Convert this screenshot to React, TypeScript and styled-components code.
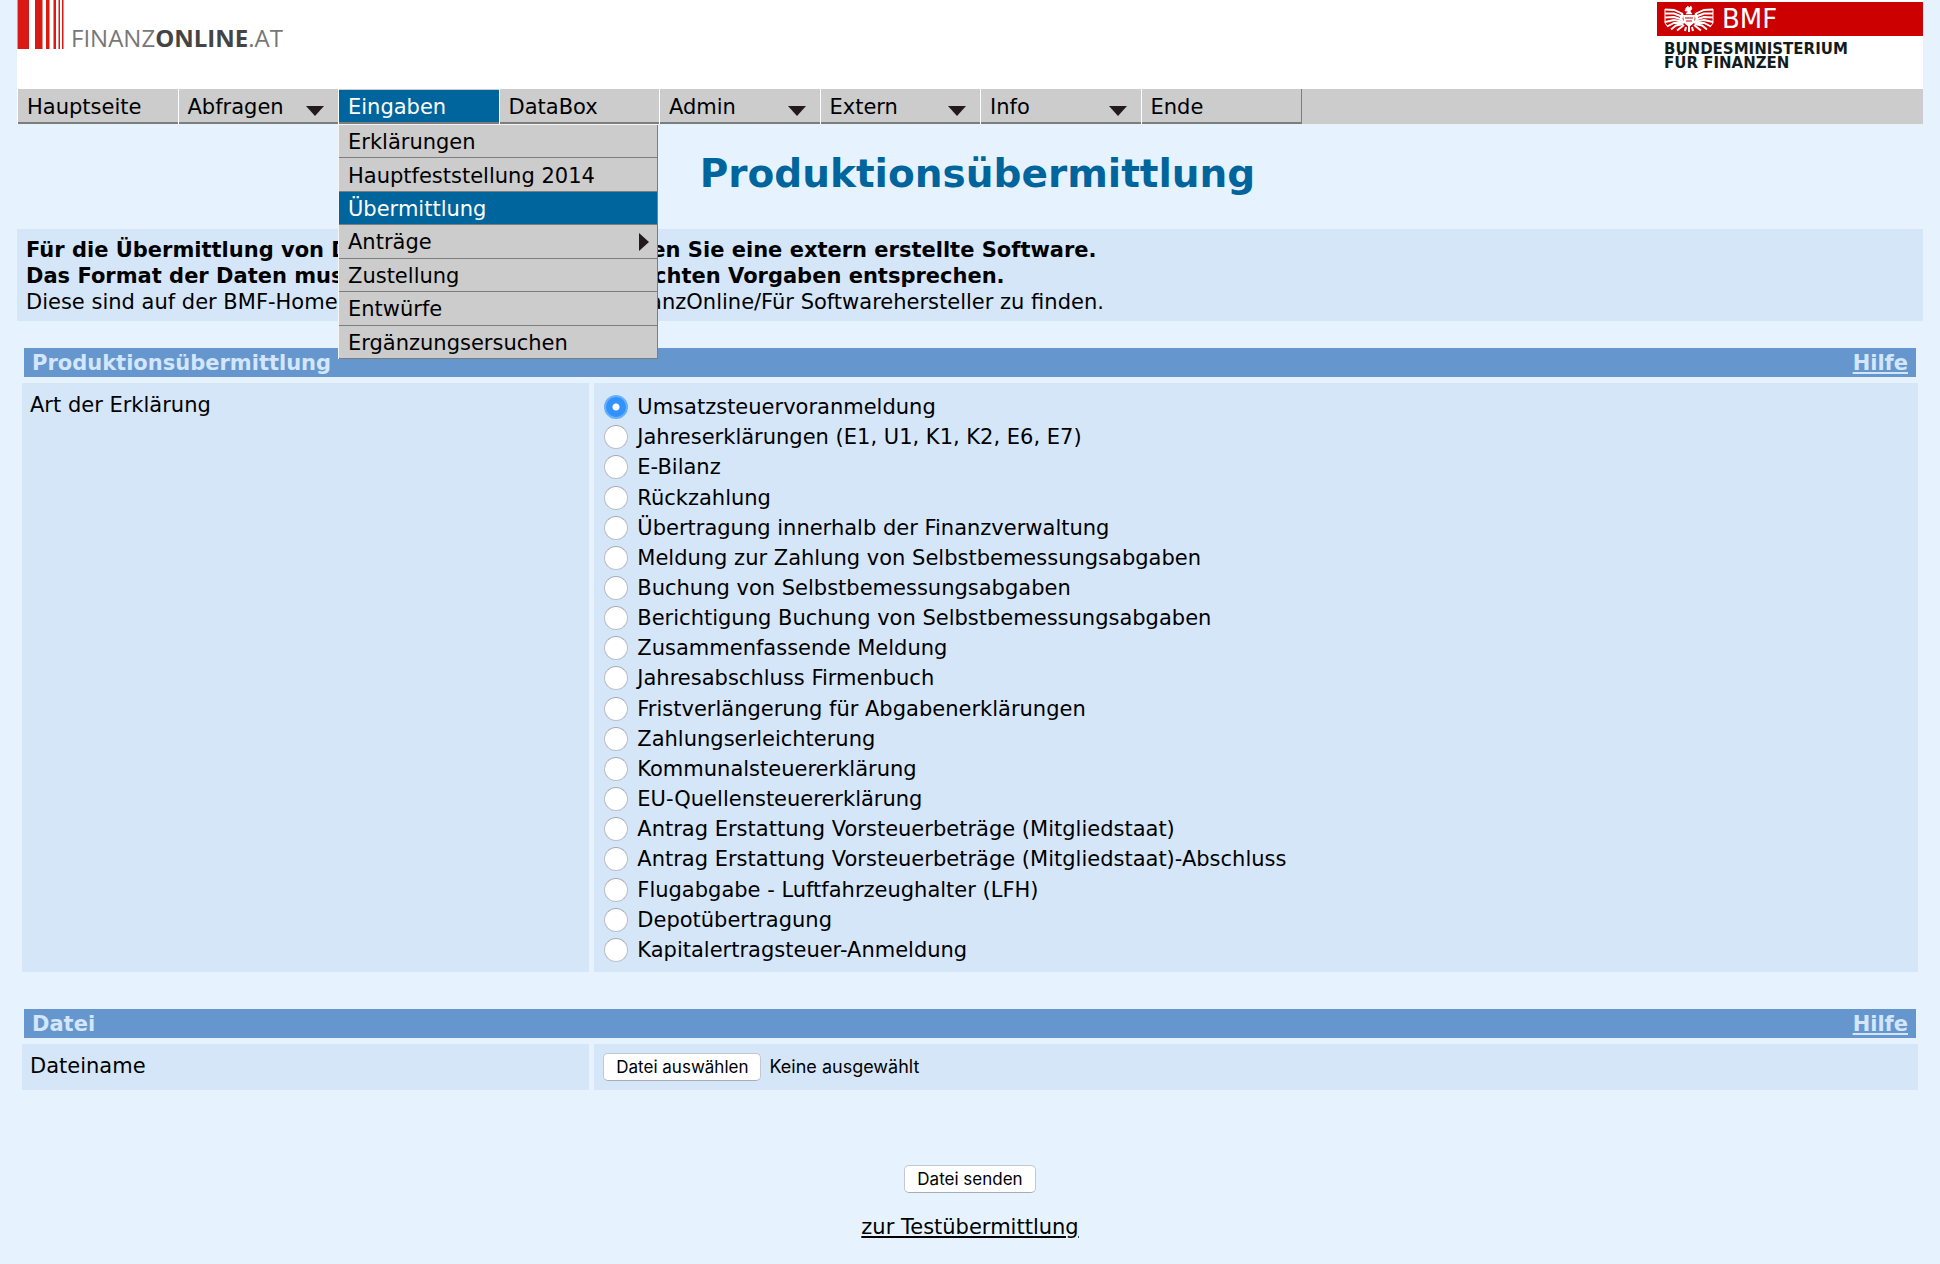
import React, { useRef, useState } from 'react';
import styled, { createGlobalStyle } from 'styled-components';

const color = {
  page: '#e6f3ff',
  panel: '#d6e6f9',
  bar: '#6597ce',
  barText: '#d3e6fb',
  brand: '#00659c',
  menu: '#cccccc',
  edge: '#7d7d7d',
  red: '#cc0000',
};

const GlobalStyle = createGlobalStyle`
  * { box-sizing: border-box; }
  body {
    margin: 0;
    background: ${color.page};
    color: #000;
    font-family: Verdana, "DejaVu Sans", sans-serif;
    font-size: 21px;
    line-height: 26px;
  }
  ul, h1, h2, p { margin: 0; padding: 0; }
  ul { list-style: none; }
`;

const Page = styled.div`
  padding: 0 17px 16px;
`;

const Header = styled.header`
  display: flex;
  justify-content: space-between;
  align-items: flex-start;
  height: 89px;
  background: #fff;
`;

const Brand = styled.a`
  display: flex;
  align-items: flex-start;
  gap: 6px;
  color: #777;
  text-decoration: none;
  font: 400 24px/30px "Open Sans", "Noto Sans", sans-serif;
  & > svg { display: block; }
  & > span { padding-top: 23px; }
  & b { font-weight: 700; color: #444; }
`;

const Ministry = styled.div`
  width: 266px;
  padding-top: 2px;
`;

const MinistryBar = styled.div`
  display: flex;
  align-items: center;
  gap: 8px;
  height: 34px;
  padding-left: 7px;
  background: ${color.red};
  color: #fff;
  font: 26px/34px "DejaVu Sans", sans-serif;
`;

const MinistryName = styled.p`
  && { padding: 6px 0 0 7px; }
  color: #101c1c;
  font-weight: 700;
  font-size: 15px;
  line-height: 14px;
`;

const Nav = styled.nav`
  height: 35px;
  background: ${color.menu};
`;

const NavList = styled.ul`
  display: grid;
  grid-template-columns: repeat(8, 1fr);
  width: 1285px;
  height: 35px;
  border-right: 1px solid ${color.edge};
`;

const NavItem = styled.li`
  position: relative;
  display: flex;
  border-left: 1px solid #fff;
`;

const NavLink = styled.a<{ $active?: boolean }>`
  flex: 1;
  display: flex;
  align-items: center;
  justify-content: space-between;
  margin-top: 1px;
  padding: 2px 14px 0 9px;
  border-bottom: 2px solid ${color.edge};
  background: ${p => (p.$active ? color.brand : color.menu)};
  color: ${p => (p.$active ? '#fff' : '#000')};
  text-decoration: none;
  & > svg { margin-top: 7px; }
`;

const SubMenu = styled.ul`
  position: absolute;
  top: 35px;
  left: -1px;
  z-index: 1;
  display: grid;
  grid-auto-rows: 1fr;
  width: 320px;
  height: 235px;
  border: solid #f4f4f4;
  border-width: 1px 0 0 1px;
`;

const SubLink = styled.a<{ $active?: boolean }>`
  display: flex;
  align-items: center;
  justify-content: space-between;
  height: 100%;
  padding: 2px 8px 0 9px;
  border: solid ${color.edge};
  border-width: 0 1px 1px 0;
  background: ${p => (p.$active ? color.brand : color.menu)};
  color: ${p => (p.$active ? '#fff' : '#000')};
  text-decoration: none;
`;

const Title = styled.h1`
  && { padding: 26px 0 31px 15px; }
  color: ${color.brand};
  font-size: 39px;
  line-height: 48px;
  text-align: center;
`;

const Notice = styled.section`
  padding: 8px 9px 6px;
  background: ${color.panel};
`;

const Section = styled.section`
  margin: 27px 5px 0;
  & + & { margin-top: 37px; }
`;

const SectionBar = styled.div`
  display: flex;
  justify-content: space-between;
  margin: 0 2px 6px;
  padding: 2px 8px 1px;
  background: ${color.bar};
  color: ${color.barText};
  font-weight: 700;
  & h2 { font-size: 21px; }
  & a { color: inherit; }
`;

const Row = styled.div`
  display: grid;
  grid-template-columns: 3fr 7fr;
  gap: 5px;
`;

const LabelCell = styled.div`
  padding: 9px 8px;
  background: ${color.panel};
`;

const FieldCell = styled.div`
  display: flex;
  padding: 9px;
  background: ${color.panel};
`;

const RadioList = styled.div`
  flex: 1;
  display: grid;
  grid-auto-rows: 1fr;
  min-height: 573px;
  margin-bottom: -2px;
`;

const Option = styled.label`
  display: flex;
  align-items: center;
  gap: 8px;
`;

const Radio = styled.input`
  appearance: none;
  flex: none;
  width: 24px;
  height: 24px;
  margin: 0 1px;
  border: 1px solid #b9bec6;
  border-top-color: #a3a8b0;
  border-radius: 50%;
  background: #fff;
  &:checked {
    border: 2px solid #68affc;
    background: radial-gradient(circle, #fff 3px, #3292fb 4px);
  }
`;

const FileRow = styled(FieldCell)`
  align-items: center;
  gap: 8px;
  font: 18px/24px Inter, sans-serif;
`;

const Button = styled.button`
  height: 28px;
  padding: 0 12px;
  border: 1px solid #c3c8ce;
  border-bottom-color: #a9adb3;
  border-radius: 5px;
  background: #fff;
  color: #000;
  font: 17px/24px Inter, sans-serif;
`;

const Actions = styled.div`
  display: flex;
  flex-direction: column;
  align-items: center;
  gap: 21px;
  padding-top: 75px;
  & a { color: #000; }
`;

const DownArrow = () => (
  <svg width="18" height="10" viewBox="0 0 18 10" aria-hidden="true">
    <path d="M0 0H18L9 10Z" fill="#221a1c" />
  </svg>
);

const RightArrow = () => (
  <svg width="10" height="18" viewBox="0 0 10 18" aria-hidden="true">
    <path d="M0 0V18L10 9Z" fill="#221a1c" />
  </svg>
);

const BarsLogo = () => (
  <svg width="48" height="49" viewBox="0 0 48 49" aria-hidden="true">
    <g fill="#d91a14">
      <rect x="0.5" width="11.5" height="49" />
      <rect x="18" width="7.5" height="49" />
      <rect x="29" width="3.5" height="49" />
      <rect x="36.5" width="2.5" height="49" />
      <rect x="41.5" width="1.5" height="49" />
      <rect x="45" width="1.5" height="49" />
    </g>
  </svg>
);

const Eagle = () => (
  <svg width="50" height="28" viewBox="0 0 50 28" fill="none" stroke="#fff" strokeWidth="1.9" aria-hidden="true">
    <g id="wing">
      <path d="M1 4.5L10 5L19 9" />
      <path d="M1 8.5L10 8.5L19 12" />
      <path d="M1 12.5L10 12L18 14.5" />
      <path d="M1 17L10 15L18 16.5" />
      <path d="M3 21.5L10 18L18 18" />
      <path d="M7 24.5L12 20.5L19 19" />
      <path d="M13 25.5L20 20" />
      <path d="M1 4V18L4 22" strokeWidth="1" />
      <path d="M19 9C16 11 17 16 20 18" strokeWidth="2.4" />
    </g>
    <use href="#wing" transform="translate(50 0) scale(-1 1)" />
    <path d="M22 3L24 1L25 3L27 1L28 4L26 6L28 9H22L24 6L21 6Z" fill="#fff" strokeWidth="0.6" />
    <path d="M19 10H31L30 18L25 22L20 18Z" fill="#fff" stroke="none" />
    <path d="M21 13H29M22 16H28" stroke="#cc0000" strokeWidth="1.2" />
    <path d="M25 20V27M22 22L21 26M28 22L29 26" strokeWidth="2" />
  </svg>
);

const navItems = [
  { text: 'Hauptseite' },
  { text: 'Abfragen', arrow: true },
  { text: 'Eingaben', active: true },
  { text: 'DataBox' },
  { text: 'Admin', arrow: true },
  { text: 'Extern', arrow: true },
  { text: 'Info', arrow: true },
  { text: 'Ende' },
];

const subItems = [
  { text: 'Erklärungen' },
  { text: 'Hauptfeststellung 2014' },
  { text: 'Übermittlung', active: true },
  { text: 'Anträge', arrow: true },
  { text: 'Zustellung' },
  { text: 'Entwürfe' },
  { text: 'Ergänzungsersuchen' },
];

const kinds = [
  'Umsatzsteuervoranmeldung',
  'Jahreserklärungen (E1, U1, K1, K2, E6, E7)',
  'E-Bilanz',
  'Rückzahlung',
  'Übertragung innerhalb der Finanzverwaltung',
  'Meldung zur Zahlung von Selbstbemessungsabgaben',
  'Buchung von Selbstbemessungsabgaben',
  'Berichtigung Buchung von Selbstbemessungsabgaben',
  'Zusammenfassende Meldung',
  'Jahresabschluss Firmenbuch',
  'Fristverlängerung für Abgabenerklärungen',
  'Zahlungserleichterung',
  'Kommunalsteuererklärung',
  'EU-Quellensteuererklärung',
  'Antrag Erstattung Vorsteuerbeträge (Mitgliedstaat)',
  'Antrag Erstattung Vorsteuerbeträge (Mitgliedstaat)-Abschluss',
  'Flugabgabe - Luftfahrzeughalter (LFH)',
  'Depotübertragung',
  'Kapitalertragsteuer-Anmeldung',
];

export default function App() {
  const [kind, setKind] = useState(kinds[0]);
  const [fileName, setFileName] = useState('');
  const fileInput = useRef<HTMLInputElement>(null);

  return (
    <Page>
      <GlobalStyle />
      <Header>
        <Brand href="#">
          <BarsLogo />
          <span>FINANZ<b>ONLINE</b>.AT</span>
        </Brand>
        <Ministry>
          <MinistryBar><Eagle />BMF</MinistryBar>
          <MinistryName>BUNDESMINISTERIUM<br />FÜR FINANZEN</MinistryName>
        </Ministry>
      </Header>
      <Nav>
        <NavList>
          {navItems.map(item => (
            <NavItem key={item.text}>
              <NavLink href="#" $active={item.active}>
                {item.text}
                {item.arrow && <DownArrow />}
              </NavLink>
              {item.active && (
                <SubMenu>
                  {subItems.map(sub => (
                    <li key={sub.text}>
                      <SubLink href="#" $active={sub.active}>
                        {sub.text}
                        {sub.arrow && <RightArrow />}
                      </SubLink>
                    </li>
                  ))}
                </SubMenu>
              )}
            </NavItem>
          ))}
        </NavList>
      </Nav>
      <main>
        <Title>Produktionsübermittlung</Title>
        <Notice>
          <p><b>Für die Übermittlung von Daten per Internet benötigen Sie eine extern erstellte Software.</b></p>
          <p><b>Das Format der Daten muss den vom BMF veröffentlichten Vorgaben entsprechen.</b></p>
          <p>Diese sind auf der BMF-Homepage unter E-Government/FinanzOnline/Für Softwarehersteller zu finden.</p>
        </Notice>
        <Section>
          <SectionBar><h2>Produktionsübermittlung</h2><a href="#">Hilfe</a></SectionBar>
          <Row>
            <LabelCell id="kind-label">Art der Erklärung</LabelCell>
            <FieldCell>
              <RadioList role="radiogroup" aria-labelledby="kind-label">
                {kinds.map(k => (
                  <Option key={k}>
                    <Radio type="radio" name="kind" checked={kind === k} onChange={() => setKind(k)} />
                    {k}
                  </Option>
                ))}
              </RadioList>
            </FieldCell>
          </Row>
        </Section>
        <Section>
          <SectionBar><h2>Datei</h2><a href="#">Hilfe</a></SectionBar>
          <Row>
            <LabelCell><label htmlFor="file">Dateiname</label></LabelCell>
            <FileRow>
              <input
                id="file"
                type="file"
                hidden
                ref={fileInput}
                onChange={e => setFileName(e.target.files?.[0]?.name ?? '')}
              />
              <Button type="button" onClick={() => fileInput.current?.click()}>Datei auswählen</Button>
              <span>{fileName || 'Keine ausgewählt'}</span>
            </FileRow>
          </Row>
        </Section>
        <Actions>
          <Button type="submit">Datei senden</Button>
          <a href="#">zur Testübermittlung</a>
        </Actions>
      </main>
    </Page>
  );
}
